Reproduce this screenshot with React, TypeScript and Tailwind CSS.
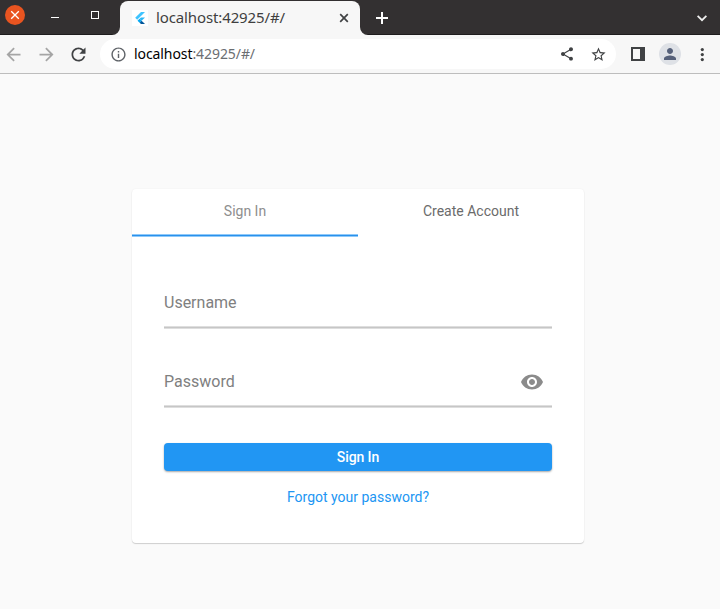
import React from "react";
import {
  MdArrowBack,
  MdArrowForward,
  MdInfoOutline,
  MdPerson,
  MdRefresh,
  MdShare,
  MdStarBorder,
  MdVisibility,
} from "react-icons/md";

function FlutterLogo() {
  return (
    <svg width="16" height="16" viewBox="0 0 16 16" className="ml-3 bg-white">
      <path d="M9 2h4L5.2 9.8l-2-2z" fill="#40c4ff" />
      <path d="M9 7.4h4L9.6 10.8l-2-2z" fill="#29b6f6" />
      <path d="M5.5 10.8l2.1-2 2 2-2 2z" fill="#03a9f4" />
      <path d="M7.6 12.8l2-2L13 14.1H9z" fill="#01579b" />
    </svg>
  );
}

function TitleBar() {
  return (
    <header className="flex h-[35px] border-b border-[#1e1c1d] bg-[#333031]">
      <div className="flex w-[112px] shrink-0 pl-[5px] pt-[5px]">
        <button aria-label="Close window" className="flex size-5 items-center justify-center rounded-full bg-[#e95420]">
          <svg width="10" height="10" viewBox="0 0 10 10" stroke="white" strokeWidth="1.3">
            <path d="M1.2 1.2l7.6 7.6M8.8 1.2L1.2 8.8" />
          </svg>
        </button>
        <button aria-label="Minimize" className="ml-[26px] mt-[12px] h-px w-2 bg-white" />
        <button aria-label="Maximize" className="ml-8 mt-[6px] size-2 border border-white" />
      </div>
      <svg width="8" height="8" viewBox="0 0 8 8" className="-mb-px mt-auto shrink-0">
        <path d="M8 0v8H0a8 8 0 0 0 8-8z" fill="#f7f7f7" />
      </svg>
      <div className="-mb-px mt-px flex w-60 shrink-0 items-center rounded-t-lg bg-[#f7f7f7]">
        <FlutterLogo />
        <span className="-mt-0.5 ml-2 w-[180px] whitespace-nowrap font-['Noto_Sans',sans-serif] text-[15px] leading-5 tracking-[-0.12px] text-[#3f3f3f]">
          localhost:42925/#/
        </span>
        <svg width="10" height="10" viewBox="0 0 10 10" stroke="#404244" strokeWidth="1.7" className="ml-[3px]">
          <path d="M1.2 1.2l7.6 7.6M8.8 1.2L1.2 8.8" />
        </svg>
      </div>
      <svg width="8" height="8" viewBox="0 0 8 8" className="-mb-px mt-auto shrink-0">
        <path d="M0 0v8h8a8 8 0 0 1-8-8z" fill="#f7f7f7" />
      </svg>
      <svg width="12" height="12" viewBox="0 0 12 12" stroke="white" strokeWidth="2" className="ml-2 mt-3">
        <path d="M0 6h12M6 0v12" />
      </svg>
      <svg width="10" height="7" viewBox="0 0 10 7" fill="none" stroke="#eeeeee" strokeWidth="1.8" className="ml-auto mr-[13px] mt-[15px]">
        <path d="M.6.8L5 5.2 9.4.8" />
      </svg>
    </header>
  );
}

function Toolbar() {
  return (
    <nav className="flex h-[39px] items-start border-b border-[#bdbdbd] bg-[#f7f7f7] pt-1 text-[#404244]">
      <div className="flex h-[30px] w-[100px] shrink-0 items-center pl-[3px]">
        <MdArrowBack size={21} color="#a5a5a5" />
        <MdArrowForward size={21} color="#a5a5a5" className="ml-3" />
        <MdRefresh size={21} className="ml-[11px]" />
      </div>
      <div className="flex h-[30px] w-[516px] shrink-0 items-center rounded-full bg-white pl-[9.5px]">
        <MdInfoOutline size={17} color="#5f6368" />
        <span className="-mt-0.5 ml-[7.5px] whitespace-nowrap font-['Noto_Sans',sans-serif] text-[14px] tracking-[-0.08px] text-[#6b6e72]">
          <span className="text-black">localhost</span>:42925/#/
        </span>
        <MdShare size={16} className="ml-auto" />
        <MdStarBorder size={17} className="ml-[15px] mr-[9.5px]" />
      </div>
      <svg width="14" height="14" viewBox="0 0 14 14" className="ml-[15px] mt-2" fill="#404244">
        <path fillRule="evenodd" d="M0 0h14v14H0zM2 2v10h7V2z" />
      </svg>
      <div className="ml-[14px] mt-1 flex size-[22px] items-center justify-center rounded-full bg-[#dee1e6]">
        <MdPerson size={18} color="#56617a" />
      </div>
      <svg width="4" height="14" viewBox="0 0 4 14" className="ml-[19px] mt-[9px]" fill="#404244">
        <circle cx="2.3" cy="1.6" r="1.6" />
        <circle cx="2.3" cy="6.6" r="1.6" />
        <circle cx="2.3" cy="11.6" r="1.6" />
      </svg>
    </nav>
  );
}

function Field({ label, children }: { label: string; children?: React.ReactNode }) {
  return (
    <div className="flex h-[52px] flex-col text-[16px] text-[#808080]">
      <div className="flex flex-1 items-center justify-between pr-2 pt-[3px]">
        <span>{label}</span>
        {children}
      </div>
      <div className="h-[3px] border-y border-[#dedede] bg-[#c6c6c6]" />
    </div>
  );
}

function SignInCard() {
  return (
    <main className="mx-auto mt-[115px] h-[354px] w-[452px] -translate-x-[2px] rounded bg-white shadow-[0_1px_1px_rgba(0,0,0,0.17),0_0_2px_rgba(0,0,0,0.06)]">
      <div className="flex h-12 text-[14px]">
        <button className="flex w-1/2 flex-col items-center pt-3 text-[#8e8e8e]">
          Sign In
          <span className="mt-auto h-[3px] w-full border-y border-[#8fc9f9] bg-[#2991ec]" />
        </button>
        <button className="flex w-1/2 justify-center pt-3 text-[#6b6b6b]">Create Account</button>
      </div>
      <div className="flex flex-col px-8 pt-10">
        <Field label="Username" />
        <div className="h-[27px]" />
        <Field label="Password">
          <MdVisibility size={24} color="#8b8b8b" />
        </Field>
        <button className="mt-[35px] h-7 rounded bg-[#2196f3] text-[14px] font-medium tracking-[-0.1px] text-white shadow-[0_1px_2px_rgba(0,0,0,0.35)]">
          Sign In
        </button>
        <button className="mt-4 self-center text-[14px] text-[#2196f3]">Forgot your password?</button>
      </div>
    </main>
  );
}

export default function App() {
  return (
    <div className="h-[609px] w-[720px] overflow-hidden bg-[#fafafa] font-[Roboto,sans-serif]">
      <TitleBar />
      <Toolbar />
      <SignInCard />
    </div>
  );
}
